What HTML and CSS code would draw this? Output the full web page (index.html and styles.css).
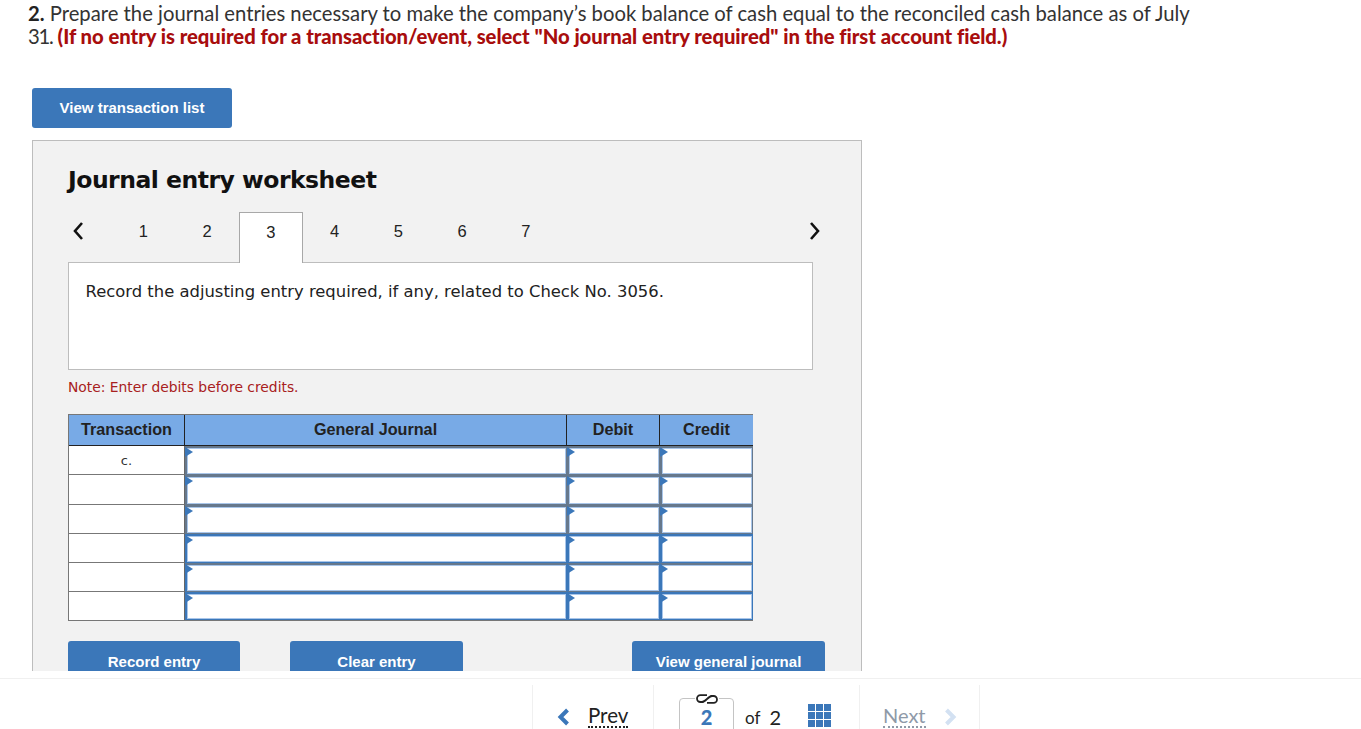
FILE: index.html
```html
<!DOCTYPE html>
<html lang="en">
<head>
<meta charset="utf-8">
<title>Journal entry worksheet</title>
<link rel="stylesheet" href="styles.css">
</head>
<body>
<main class="content">
  <p class="question"><b>2.</b> Prepare the journal entries necessary to make the company’s book balance of cash equal to the reconciled cash balance as of July<br><span class="num">31.</span> <strong>(If no entry is required for a transaction/event, select "No journal entry required" in the first account field.)</strong></p>
  <button class="btn btn-list">View transaction list</button>
  <section class="panel">
    <h1 class="title">Journal entry worksheet</h1>
    <div class="tabs">
      <svg class="chev chev-left" width="12" height="20" viewBox="0 0 12 20"><path d="M10 2 3 10l7 8" fill="none" stroke="#111" stroke-width="2.6"/></svg>
      <span class="tab">1</span><span class="tab">2</span><span class="tab tab-on">3</span><span class="tab">4</span><span class="tab">5</span><span class="tab">6</span><span class="tab">7</span>
      <svg class="chev chev-right" width="12" height="20" viewBox="0 0 12 20"><path d="M2 2l7 8-7 8" fill="none" stroke="#111" stroke-width="2.6"/></svg>
    </div>
    <div class="prompt">Record the adjusting entry required, if any, related to Check No. 3056.</div>
    <p class="note">Note: Enter debits before credits.</p>
    <div class="sheet">
      <div class="hd">Transaction</div><div class="hd">General Journal</div><div class="hd">Debit</div><div class="hd hd-last">Credit</div>
      <div class="tx">c.</div><div class="in"></div><div class="in"></div><div class="in in-last"></div>
      <div class="tx"></div><div class="in"></div><div class="in"></div><div class="in in-last"></div>
      <div class="tx"></div><div class="in"></div><div class="in"></div><div class="in in-last"></div>
      <div class="tx"></div><div class="in blue"></div><div class="in blue"></div><div class="in in-last blue"></div>
      <div class="tx"></div><div class="in side"></div><div class="in side"></div><div class="in in-last side"></div>
      <div class="tx tx-end"></div><div class="in blue"></div><div class="in blue"></div><div class="in in-last blue"></div>
    </div>
    <div class="actions">
      <button class="btn btn-record">Record entry</button>
      <button class="btn btn-clear">Clear entry</button>
      <button class="btn btn-view">View general journal</button>
    </div>
  </section>
</main>
<footer class="pager">
  <div class="seg seg-prev">
    <svg width="13" height="18" viewBox="0 0 13 18"><path d="M10.5 2 3.5 9l7 7" fill="none" stroke="#3b77b9" stroke-width="4"/></svg>
    <a class="plink">Prev</a>
  </div>
  <div class="seg seg-mid">
    <div class="pagebox">
      <svg class="linkicon" width="24" height="10" viewBox="0 0 24 10"><g fill="none" stroke="#222" stroke-width="1.8"><path d="M12 1.2H5.4a3.4 3.4 0 0 0 0 6.8H8.5"/><path d="M12 8.8h6.6a3.4 3.4 0 0 0 0-6.8H15.5"/><path d="M7 8c3.5 0 6.5-6 10-6"/></g></svg>
      <span class="cur">2</span>
    </div>
    <span class="of">of</span><span class="total">2</span>
    <div class="grid"><i></i><i></i><i></i><i></i><i></i><i></i><i></i><i></i><i></i></div>
  </div>
  <div class="seg seg-next">
    <a class="plink plink-off">Next</a>
    <svg width="13" height="18" viewBox="0 0 13 18"><path d="M2.5 2l7 7-7 7" fill="none" stroke="#d3e1f2" stroke-width="4"/></svg>
  </div>
</footer>
</body>
</html>
```
FILE: styles.css
```css
* { box-sizing: border-box; }
html, body { margin: 0; padding: 0; }
body { width: 1361px; height: 729px; overflow: hidden; background: #fff; font-family: "Lato", sans-serif; color: #222; font-variant-ligatures: none; }

.content { height: 671px; overflow: hidden; padding: 2px 0 0 28px; }
.question { margin: 0; font-size: 20.25px; line-height: 23px; color: #333; width: 1300px; }
.question b { color: #222; }
.question .num { letter-spacing: -1.3px; }
.question strong { color: #a80d0d; font-weight: 900; letter-spacing: -0.04px; }

.btn { display: block; border: 0; border-radius: 3px; background: #3b77b9; color: #fff; font-family: "Liberation Sans", sans-serif; font-weight: 700; font-size: 15px; padding: 0; cursor: pointer; }
.btn-list { width: 200px; height: 40px; margin: 40px 0 0 4px; padding-bottom: 2px; }

.panel { width: 830px; height: 640px; margin: 12px 0 0 4px; padding: 0 35px; background: #f2f2f2; border: 1px solid #bdbdbd; }
.title { margin: 25px 0 0; font-family: "DejaVu Sans", sans-serif; font-size: 23.5px; line-height: 28px; font-weight: 700; color: #111; letter-spacing: -0.5px; }

.tabs { display: flex; width: 745px; height: 51px; margin-top: 18px; position: relative; z-index: 1; font-family: "Liberation Sans", sans-serif; font-size: 16.5px; color: #222; }
.chev { align-self: center; flex: none; margin-top: -13px; }
.chev-left { margin-left: 4px; margin-right: 27.5px; }
.chev-right { margin-left: auto; margin-right: -8px; }
.tab { width: 63.75px; height: 51px; display: flex; align-items: center; justify-content: center; padding-bottom: 12px; }
.tab-on { background: #fff; border: 1px solid #a8a8a8; border-bottom: 0; }

.prompt { width: 745px; height: 108px; margin-top: -1px; padding: 19px 17px 19px 16.5px; background: #fff; border: 1px solid #bdbdbd; font-family: "DejaVu Sans", sans-serif; font-size: 16.4px; line-height: 20px; color: #222; }
.note { margin: 9px 0 0; font-family: "DejaVu Sans", sans-serif; font-size: 13.85px; line-height: 17px; color: #a82020; }

.sheet { display: grid; grid-template-columns: 116px 382px 93px 93px; grid-template-rows: 31px 29px 30px 29px 29px 29px 28px; width: 685px; margin-top: 18px; border: 1px solid #777; background: #fff; }
.hd { display: flex; align-items: center; justify-content: center; padding-bottom: 2px; background: #78aae6; border-right: 1px solid #222; border-bottom: 1px solid #222; font-family: "Liberation Sans", sans-serif; font-weight: 700; font-size: 16.2px; color: #222; }
.hd-last { border-right: 0; }
.tx { display: flex; align-items: center; justify-content: center; border-right: 1px solid #666; border-bottom: 1px solid #777; font-family: "DejaVu Sans", sans-serif; font-size: 13px; color: #333; }
.tx-end { border-bottom: 0; }
.in { position: relative; background: #fff; border-style: solid; border-color: #66788c; border-width: 2px 1px 1px 2px; }
.in::before { content: ""; position: absolute; inset: 0; border: 1px solid #a9c6ea; }
.in::after { content: ""; position: absolute; left: -2px; top: -1px; border-left: 8px solid #3b77b9; border-top: 5px solid transparent; border-bottom: 5px solid transparent; }
.in-last { border-right-width: 1px; }
.in.blue { border-color: #3b77b9; }
.in.side { border-left-color: #3b77b9; border-right-color: #3b77b9; }

.actions { display: flex; margin-top: 20px; }
.actions .btn { height: 40px; }
.btn-record { width: 172px; }
.btn-clear { width: 173px; margin-left: 50px; }
.btn-view { width: 193px; margin-left: 169px; }

.pager { display: flex; height: 58px; margin-top: 7px; padding: 6px 0 0 532px; border-top: 1px solid #f0f0f0; }
.seg { display: flex; height: 60px; align-items: flex-start; border-left: 1px solid #f0f0f0; }
.seg-prev { width: 121px; padding: 23px 0 0 24px; gap: 18px; }
.seg-mid { width: 206px; padding: 13px 0 0 25px; }
.seg-next { width: 121px; padding: 23px 0 0 23px; gap: 18px; border-right: 1px solid #f0f0f0; }
.plink { font-size: 20.5px; line-height: 22px; margin-top: -4px; border-bottom: 2px dotted #222; color: #222; }
.plink-off { font-size: 20px; color: #8f9aa8; border-bottom-color: #8f9aa8; }
.pagebox { position: relative; width: 55px; height: 40px; border: 1px solid #c4c4c4; border-radius: 4px; text-align: center; padding-top: 6px; }
.linkicon { position: absolute; left: 15px; top: -5px; background: #fff; }
.cur { font-size: 20px; font-weight: 900; line-height: 24px; color: #3b77b9; }
.of { margin: 8px 0 0 11px; font-size: 17px; line-height: 24px; }
.total { margin: 6px 0 0 9px; font-size: 20px; line-height: 26px; }
.grid { display: grid; grid-template-columns: repeat(3, 7px); grid-auto-rows: 7px; gap: 1px; margin: 6px 0 0 27px; }
.grid i { background: #3b77b9; }
```
